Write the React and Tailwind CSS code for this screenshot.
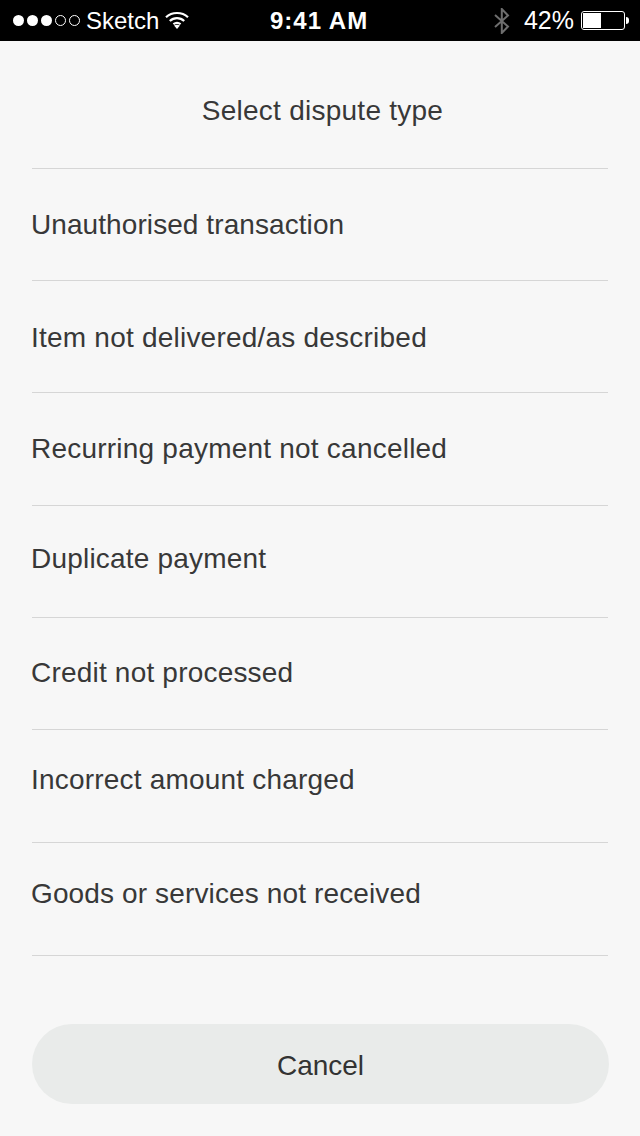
const rows = [
  ["Unauthorised transaction", "h-[112px] tracking-[0.08px]"],
  ["Item not delivered/as described", "h-[112px] pt-[2px] tracking-[0.22px]"],
  ["Recurring payment not cancelled", "h-[113px] tracking-[0.22px]"],
  ["Duplicate payment", "h-[112px] pb-[6px] tracking-[0.2px]"],
  ["Credit not processed", "h-[112px] pb-[2px] tracking-[0.2px]"],
  ["Incorrect amount charged", "h-[113px] pb-[12px] tracking-[0.2px]"],
  ["Goods or services not received", "h-[113px] pb-[10px] tracking-[0.13px]"],
];

function Wifi() {
  return (
    <svg width="24" height="18" viewBox="0 0 24 18" className="ml-[6px] mb-[1px]" fill="none" stroke="#fff" strokeWidth="2.2">
      <path d="M1 6.2 C7 0.6 17 0.6 23 6.2" />
      <path d="M4.8 10 C8.8 6.2 15.2 6.2 19.2 10" />
      <path d="M8.4 13.2 C10.6 11.6 13.4 11.6 15.6 13.2" />
      <path d="M12 18 L9 14.6 C10.8 13.4 13.2 13.4 15 14.6 Z" fill="#fff" stroke="none" />
    </svg>
  );
}

function Bluetooth() {
  return (
    <svg width="16" height="26" viewBox="0 0 16 26" fill="none" stroke="#6e6e6e" strokeWidth="2">
      <path d="M1 7 L14 18.5 L7.8 25 V1 L14 7.5 L1 19" />
    </svg>
  );
}

function Signal() {
  return (
    <div className="flex items-center gap-[3px]">
      {[0, 1, 2].map((i) => (
        <span key={i} className="w-[11px] h-[11px] rounded-full bg-white" />
      ))}
      {[0, 1].map((i) => (
        <span key={i} className="w-[11px] h-[11px] rounded-full border border-white" />
      ))}
    </div>
  );
}

export default function App() {
  return (
    <div className="w-[640px] h-[1136px] bg-[#f7f7f7] flex flex-col text-[#383838] font-['Liberation_Sans',sans-serif] overflow-hidden">
      <div className="h-[41px] bg-black text-white flex items-center pl-[13px] pr-[11px] text-[24px] shrink-0">
        <div className="flex items-center w-[257px]">
          <Signal />
          <span className="ml-[6px]">Sketch</span>
          <Wifi />
        </div>
        <span className="font-bold tracking-[1px]">9:41 AM</span>
        <div className="flex items-center ml-auto">
          <Bluetooth />
          <span className="ml-[14px] text-[25px]">42%</span>
          <div className="flex items-center ml-[7px]">
            <div className="w-[44px] h-[19px] rounded-[3px] border border-white p-[1px]">
              <div className="w-[18px] h-full bg-white" />
            </div>
            <div className="w-[3px] h-[7px] bg-white rounded-r-full ml-[1px]" />
          </div>
        </div>
      </div>

      <div className="h-[128px] ml-[32px] w-[576px] border-b border-[#d6d6d6] flex items-center justify-center text-[28px] tracking-[0.25px] pt-[13px] pl-[5px] shrink-0">
        Select dispute type
      </div>

      {rows.map(([label, cls]) => (
        <div key={label} className={`${cls} ml-[32px] w-[576px] border-b border-[#d6d6d6] flex items-center text-[28px] shrink-0`}>
          <span className="-ml-[1px]">{label}</span>
        </div>
      ))}

      <button className="mt-[68px] ml-[32px] w-[577px] h-[80px] rounded-full bg-[#e9ebea] text-[28px] text-[#333333] flex items-center justify-center pt-[4px] shrink-0">
        Cancel
      </button>
    </div>
  );
}
